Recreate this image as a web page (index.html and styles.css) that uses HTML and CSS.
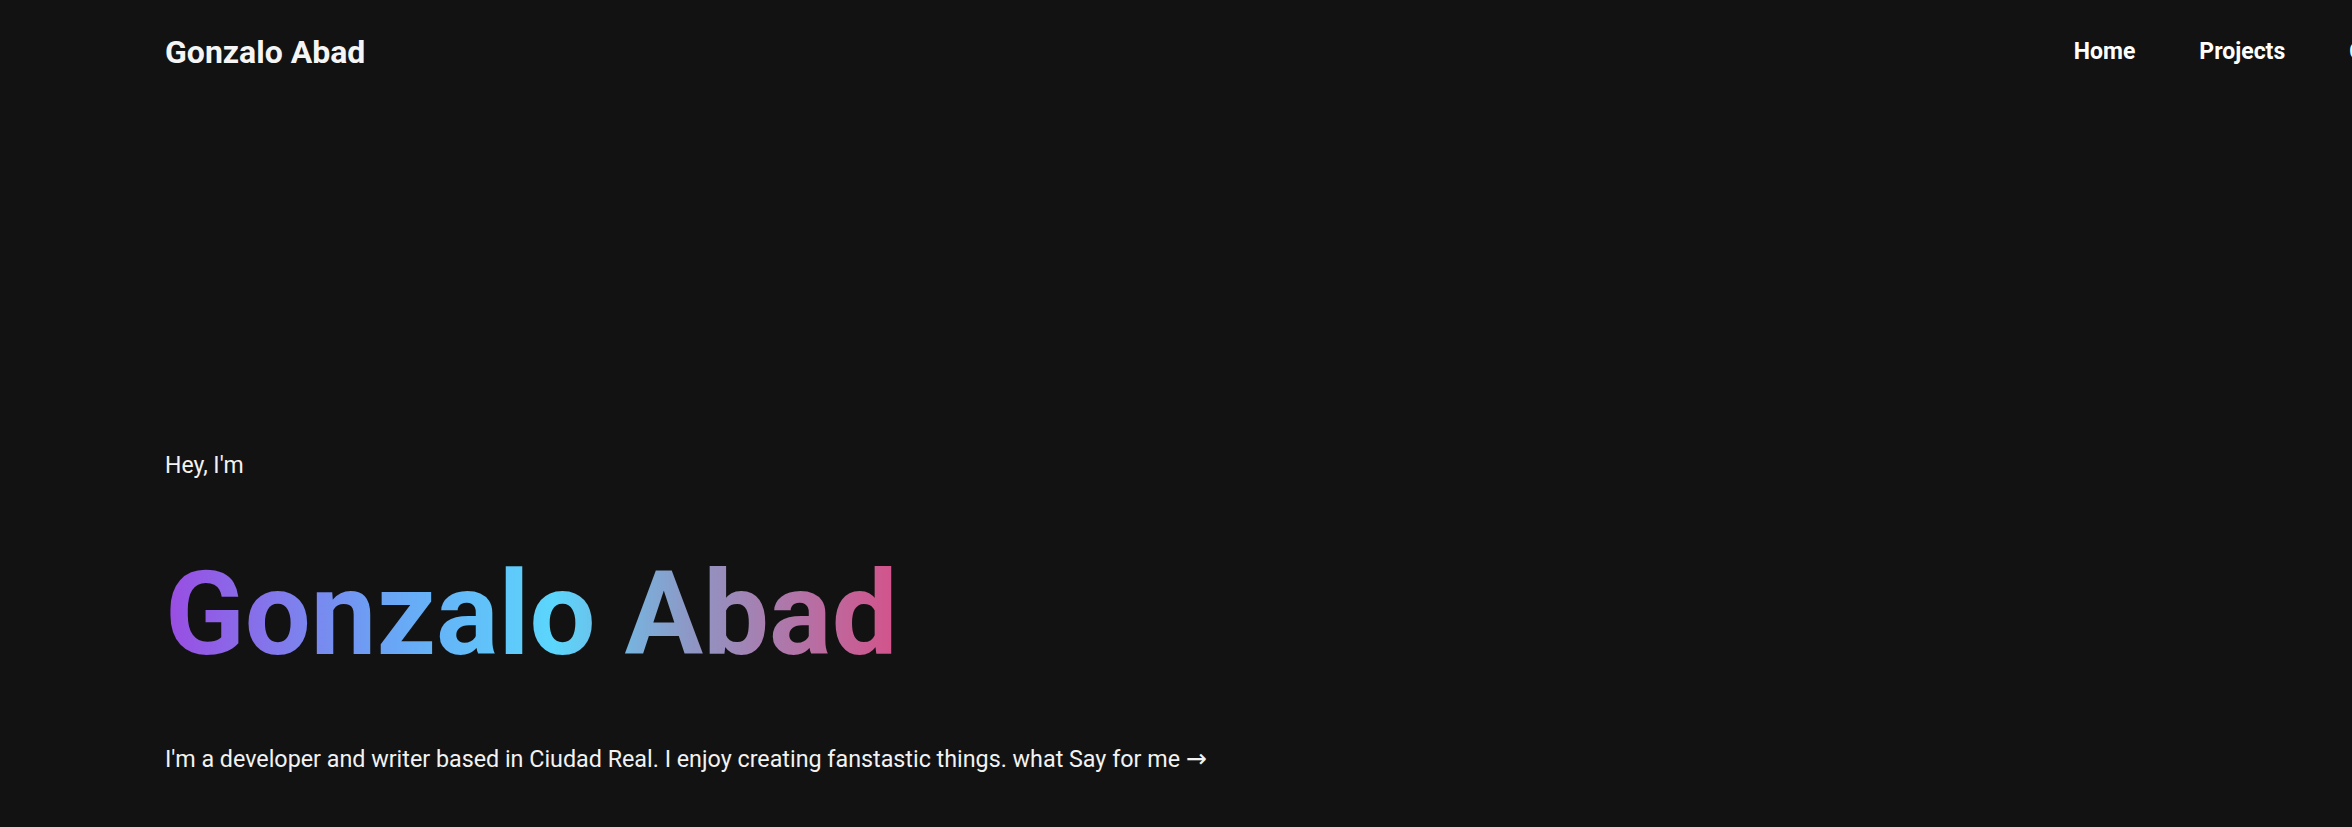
FILE: index.html
```html
<!DOCTYPE html>
<html lang="en">
<head>
<meta charset="utf-8">
<title>Gonzalo Abad</title>
<link rel="stylesheet" href="styles.css">
</head>
<body>
<header class="site-header">
  <a class="logo" href="#">Gonzalo Abad</a>
  <nav class="nav">
    <a class="nav-link" href="#">Home</a>
    <a class="nav-link" href="#">Projects</a>
    <a class="nav-link" href="#">Contact</a>
  </nav>
</header>
<main class="hero">
  <p class="hero-intro">Hey, I'm</p>
  <h1 class="hero-name">Gonzalo Abad</h1>
  <p class="hero-text">I'm a developer and writer based in Ciudad Real. I enjoy creating fanstastic things. what Say for me <span class="arrow">→</span></p>
</main>
</body>
</html>
```

FILE: styles.css
```css
html, body {
  margin: 0;
  padding: 0;
  overflow: hidden;
  background: #121212;
}
body {
  font-family: Roboto, "Liberation Sans", sans-serif;
  color: #f2f2f2;
  height: 827px;
}
a { color: inherit; text-decoration: none; }

.site-header {
  display: flex;
  align-items: center;
  height: 104px;
  padding-left: 165px;
}
.logo {
  font-size: 32px;
  font-weight: 700;
  line-height: 104px;
  color: #f5f5f5;
}
.nav {
  display: flex;
  margin-left: auto;
  margin-right: -110px;
}
.nav-link {
  font-size: 23px;
  font-weight: 700;
  line-height: 104px;
  padding: 0 32px;
  color: #fff;
}

.hero {
  padding: 344px 165px 0;
}
.hero-intro {
  margin: 0;
  font-size: 23px;
  line-height: 36px;
}
.hero-name {
  display: inline-block;
  margin: 60px 0 0;
  font-size: 117px;
  font-weight: 700;
  line-height: 1.2;
  background: linear-gradient(to right, #9a4ce2 0%, #6aa4f5 30%, #5bd6fc 53%, #8f96c4 72%, #d4528a 100%);
  -webkit-background-clip: text;
  background-clip: text;
  color: transparent;
}
.hero-text {
  margin: 59px 0 0;
  font-size: 23.3px;
  line-height: 31.5px;
}
.arrow {
  font-family: "DejaVu Sans", sans-serif;
  font-size: 25px;
}
```
